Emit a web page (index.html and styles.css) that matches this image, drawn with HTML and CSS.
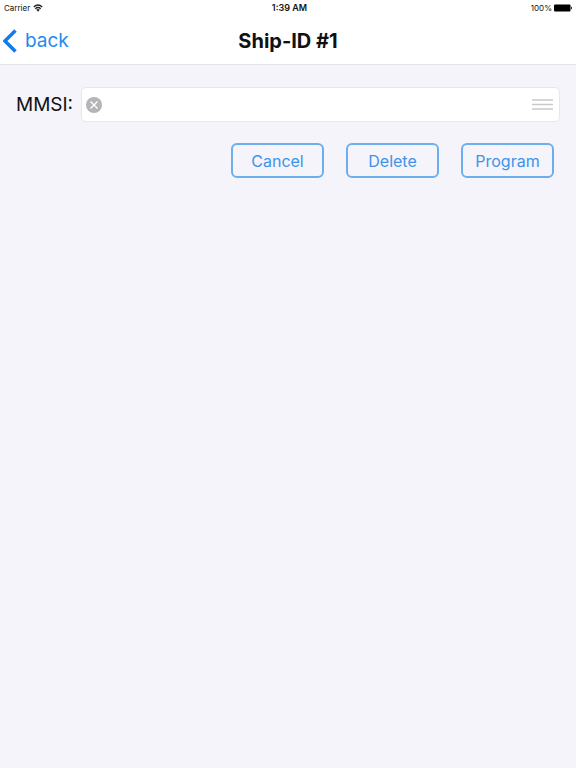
FILE: index.html
```html
<!DOCTYPE html>
<html lang="en">
<head>
<meta charset="utf-8">
<meta name="viewport" content="width=device-width, initial-scale=1">
<title>Ship-ID #1</title>
<link rel="stylesheet" href="styles.css">
</head>
<body>
<header class="top">
  <div class="status">
    <div class="carrier">
      <span>Carrier</span>
      <svg class="wifi" viewBox="0 0 20 16" aria-hidden="true"><path d="M1.5 6Q10-2 18.500 6M4.500 9.500Q10 4.500 15.500 9.500" fill="none" stroke="#222" stroke-width="2.400"/><path d="M6.500 11.500Q10 8.500 13.500 11.500L10 15.500Z" fill="#222"/></svg>
    </div>
    <time class="clock">1:39 AM</time>
    <div class="power">
      <span>100%</span>
      <svg class="battery" viewBox="0 0 19 8" aria-hidden="true"><rect y="0.500" width="16.500" height="7" rx="1" fill="#000"/><path d="M17 2.500Q19 4 17 5.500Z" fill="#000"/></svg>
    </div>
  </div>
  <nav class="nav">
    <a class="back" href="#">
      <svg class="chevron" viewBox="0 0 14 24" aria-hidden="true"><path d="M12.500 1.500L2 12L12.500 22.500" fill="none" stroke="#147bec" stroke-width="3.500"/></svg>
      <span>back</span>
    </a>
    <h1 class="title">Ship-ID #1</h1>
  </nav>
</header>
<main class="content">
  <form class="form">
    <div class="row">
      <label class="label" for="mmsi">MMSI:</label>
      <div class="field">
        <button class="clear" type="reset" aria-label="Clear">
          <svg viewBox="0 0 16 16" aria-hidden="true"><circle cx="8" cy="8" r="8" fill="#b5b5b7"/><path d="M4.500 4.500L11.500 11.500M11.500 4.500L4.500 11.500" stroke="#fff" stroke-width="1.400"/></svg>
        </button>
        <input class="input" id="mmsi" type="text" inputmode="numeric">
        <svg class="grip" viewBox="0 0 21 11" aria-hidden="true"><path d="M0 1H21M0 5.500H21M0 10H21" stroke="#c9c9cb" stroke-width="1.300"/></svg>
      </div>
    </div>
    <div class="actions">
      <button class="action" type="button">Cancel</button>
      <button class="action" type="button">Delete</button>
      <button class="action" type="button">Program</button>
    </div>
  </form>
</main>
</body>
</html>
```
FILE: styles.css
```css
* {
  box-sizing: border-box;
}

body {
  margin: 0;
  min-height: 100vh;
  background: #f4f4fa;
  color: #111;
  font-family: Inter, "Liberation Sans", sans-serif;
}

.top {
  background: #fff;
  border-bottom: 1px solid #e3e3e8;
}

.status {
  display: grid;
  grid-template-columns: 1fr auto 1fr;
  align-items: center;
  height: 16px;
  padding: 0 3px 0 4px;
  font-size: 8px;
  line-height: 16px;
}

.carrier,
.power {
  display: flex;
  align-items: center;
  gap: 3px;
}

.power {
  justify-content: flex-end;
  gap: 2px;
}

.clock {
  padding-left: 2px;
  font-size: 9px;
  font-weight: 600;
}

.wifi {
  width: 10px;
  height: 8px;
}

.battery {
  width: 19px;
  height: 8px;
}

.nav {
  display: grid;
  grid-template-columns: 1fr auto 1fr;
  align-items: center;
  height: 48px;
  padding: 2px 3px 0;
}

.back {
  display: flex;
  align-items: center;
  gap: 8px;
  color: #218bf0;
  font-size: 19px;
  line-height: 24px;
  text-decoration: none;
}

.chevron {
  width: 14px;
  height: 24px;
}

.title {
  margin: 0;
  font-size: 20px;
  line-height: 24px;
  font-weight: 700;
}

.content {
  padding: 22px 16px;
}

.row {
  display: flex;
  align-items: center;
  gap: 8px;
}

.label {
  font-size: 19px;
  line-height: 24px;
}

.field {
  display: flex;
  flex: 1;
  align-items: center;
  gap: 8px;
  height: 35px;
  padding: 0 6px 0 4px;
  border: 1px solid #e6e6eb;
  border-radius: 5px;
  background: #fff;
}

.clear {
  width: 16px;
  height: 16px;
  padding: 0;
  border: 0;
  background: none;
}

.clear svg {
  display: block;
}

.input {
  flex: 1;
  min-width: 0;
  height: 32px;
  padding: 0;
  border: 0;
  outline: 0;
  background: none;
  font: inherit;
}

.grip {
  width: 21px;
  height: 11px;
}

.actions {
  display: flex;
  justify-content: flex-end;
  gap: 22px;
  margin-top: 21px;
  padding-right: 6px;
}

.action {
  width: 93px;
  height: 35px;
  padding: 0;
  border: 2px solid #6eaef0;
  border-radius: 6px;
  background: none;
  color: #3d93ec;
  font: 400 16px/20px Inter, "Liberation Sans", sans-serif;
}
```
